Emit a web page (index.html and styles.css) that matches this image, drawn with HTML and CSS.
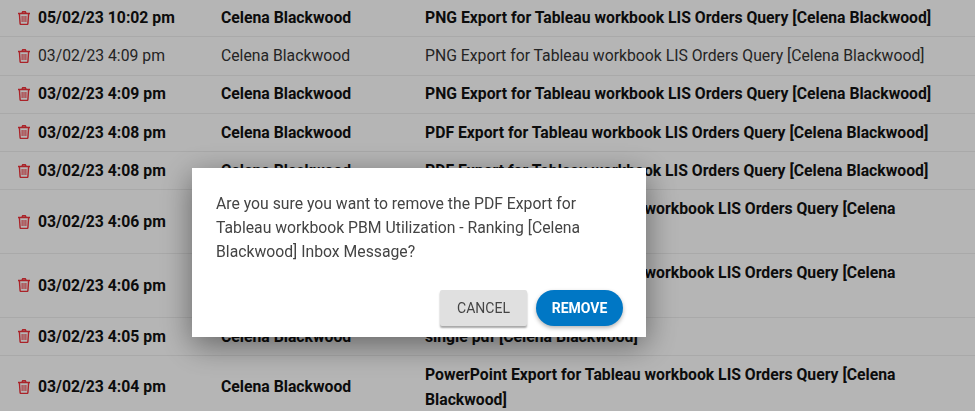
FILE: index.html
```html
<!DOCTYPE html>
<html lang="en">
<head>
    <meta charset="UTF-8">
    <meta name="viewport" content="width=device-width, initial-scale=1.0">
    <title>Inbox</title>
    <link rel="stylesheet" href="styles.css">
</head>
<body>
    <svg class="icon-defs" aria-hidden="true">
        <symbol id="trash" viewBox="0 0 12 14">
            <path d="M4 1.8 4.7.7h2.6L8 1.8M0 2.5h12" fill="none" stroke="currentColor" stroke-width="1.4"/>
            <path d="M1.4 2.8 2.1 12.6c0 .5.4.8.9.8h6c.5 0 .9-.3.9-.8l.7-9.8" fill="none" stroke="currentColor" stroke-width="1.4"/>
            <path d="M4.1 5v6M6 5v6M7.9 5v6" fill="none" stroke="currentColor" stroke-width="1"/>
        </symbol>
    </svg>

    <div class="inbox">
        <div class="row unread">
            <svg class="trash"><use href="#trash"/></svg>
            <span>05/02/23 10:02 pm</span>
            <span>Celena Blackwood</span>
            <span>PNG Export for Tableau workbook LIS Orders Query [Celena Blackwood]</span>
        </div>
        <div class="row">
            <svg class="trash"><use href="#trash"/></svg>
            <span>03/02/23 4:09 pm</span>
            <span>Celena Blackwood</span>
            <span>PNG Export for Tableau workbook LIS Orders Query [Celena Blackwood]</span>
        </div>
        <div class="row unread">
            <svg class="trash"><use href="#trash"/></svg>
            <span>03/02/23 4:09 pm</span>
            <span>Celena Blackwood</span>
            <span>PNG Export for Tableau workbook LIS Orders Query [Celena Blackwood]</span>
        </div>
        <div class="row unread">
            <svg class="trash"><use href="#trash"/></svg>
            <span>03/02/23 4:08 pm</span>
            <span>Celena Blackwood</span>
            <span>PDF Export for Tableau workbook LIS Orders Query [Celena Blackwood]</span>
        </div>
        <div class="row unread">
            <svg class="trash"><use href="#trash"/></svg>
            <span>03/02/23 4:08 pm</span>
            <span>Celena Blackwood</span>
            <span>PDF Export for Tableau workbook LIS Orders Query [Celena Blackwood]</span>
        </div>
        <div class="row unread">
            <svg class="trash"><use href="#trash"/></svg>
            <span>03/02/23 4:06 pm</span>
            <span>Celena Blackwood</span>
            <span>PowerPoint Export for Tableau workbook LIS Orders Query [Celena Blackwood]</span>
        </div>
        <div class="row unread">
            <svg class="trash"><use href="#trash"/></svg>
            <span>03/02/23 4:06 pm</span>
            <span>Celena Blackwood</span>
            <span>PowerPoint Export for Tableau workbook LIS Orders Query [Celena Blackwood]</span>
        </div>
        <div class="row unread">
            <svg class="trash"><use href="#trash"/></svg>
            <span>03/02/23 4:05 pm</span>
            <span>Celena Blackwood</span>
            <span>single pdf [Celena Blackwood]</span>
        </div>
        <div class="row unread">
            <svg class="trash"><use href="#trash"/></svg>
            <span>03/02/23 4:04 pm</span>
            <span>Celena Blackwood</span>
            <span>PowerPoint Export for Tableau workbook LIS Orders Query [Celena Blackwood]</span>
        </div>
    </div>

    <div class="overlay">
        <div class="dialog">
            <p>Are you sure you want to remove the PDF Export for Tableau workbook PBM Utilization - Ranking [Celena Blackwood] Inbox Message?</p>
            <div class="actions">
                <button class="btn-cancel">CANCEL</button>
                <button class="btn-remove">REMOVE</button>
            </div>
        </div>
    </div>
</body>
</html>
```

FILE: styles.css
```css
* {
    margin: 0;
    padding: 0;
    box-sizing: border-box;
}

html,
body {
    height: 100%;
    overflow: hidden;
}

body {
    font-family: Roboto, sans-serif;
    font-size: 15.75px;
    background: #fff;
    color: #333;
}

.icon-defs {
    display: none;
}

.inbox {
    margin-top: -0.8px;
}

.row {
    display: grid;
    grid-template-columns: 20px 183px 204px 530px;
    align-items: center;
    padding: 5.8px 0 5.8px 18px;
    line-height: 25.6px;
    border-bottom: 1px solid #eee;
}

.unread {
    font-weight: 700;
    color: #111;
}

.trash {
    width: 12px;
    height: 14px;
    color: #f0323a;
}

.overlay {
    position: fixed;
    inset: 0;
    background: rgba(0, 0, 0, 0.29);
}

.dialog {
    position: absolute;
    left: 192px;
    top: 168px;
    width: 454px;
    height: 169px;
    padding: 24px 23px 0 24px;
    background: #fff;
    box-shadow: 0 8px 30px rgba(0, 0, 0, 0.45);
    color: #444;
    line-height: 24px;
}

.actions {
    display: flex;
    justify-content: flex-end;
    gap: 9px;
    margin-top: 26px;
}

button {
    height: 36px;
    width: 87px;
    border: none;
    font-family: Roboto, sans-serif;
    font-size: 14px;
}

.btn-cancel {
    background: #e0e0e0;
    color: #444;
    border-radius: 2px;
    box-shadow: 0 2px 2px rgba(0, 0, 0, 0.35);
}

.btn-remove {
    background: #0077c5;
    color: #fff;
    font-weight: 700;
    border-radius: 18px;
    box-shadow: 0 2px 4px rgba(0, 0, 0, 0.3);
}
```
